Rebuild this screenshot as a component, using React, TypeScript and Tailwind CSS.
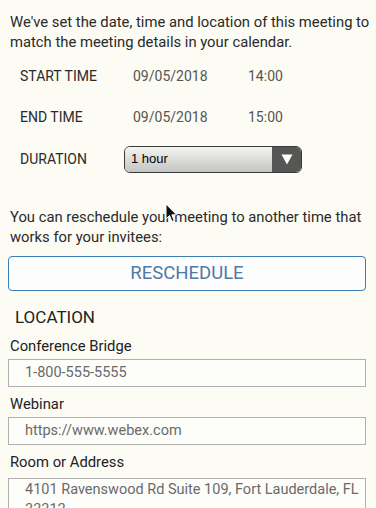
import React from "react";

function Cursor() {
  return (
    <svg
      className="absolute left-[165px] top-[203px]"
      width="14"
      height="20"
      viewBox="0 0 14 20"
    >
      <path
        d="M1 1 L1 16 L4.5 12.5 L7 18.5 L9.2 17.6 L6.8 11.8 L11.5 11.8 Z"
        fill="#111"
        stroke="#fff"
        strokeWidth="1"
        strokeLinejoin="round"
      />
    </svg>
  );
}

export default function App() {
  return (
    <div
      className="relative w-[376px] h-[508px] overflow-hidden bg-[#fcfcf4] text-[#333]"
      style={{ fontFamily: "Roboto, 'Liberation Sans', sans-serif" }}
    >
      <div className="pl-[10px] pr-[2px] pt-[12px]">
        <p className="text-[14.8px] leading-[20px] text-[#2a2a2a]">
          We've set the date, time and location of this meeting to match the
          meeting details in your calendar.
        </p>
      </div>

      <div className="pl-[20px] pt-[14px] flex flex-col text-[14px]">
        <div className="flex items-center h-[20px]">
          <span className="w-[113px] text-[#2a2a2a]">START TIME</span>
          <span className="w-[115px] text-[#555]">09/05/2018</span>
          <span className="text-[#555]">14:00</span>
        </div>
        <div className="flex items-center h-[20px] mt-[21px]">
          <span className="w-[113px] text-[#2a2a2a]">END TIME</span>
          <span className="w-[115px] text-[#555]">09/05/2018</span>
          <span className="text-[#555]">15:00</span>
        </div>
        <div className="flex items-center h-[28px] mt-[18px]">
          <span className="w-[104px] text-[#2a2a2a]">DURATION</span>
          <div className="flex w-[178px] h-[27px] rounded-[6px] border-[1.5px] border-[#3a3a3a] overflow-hidden">
            <div
              className="flex-1 flex items-center pl-[6px] bg-gradient-to-b from-[#f4f4f0] to-[#c4c4c4] text-[13px] text-black"
              style={{ fontFamily: "'Liberation Sans', Arial, sans-serif" }}
            >
              1 hour
            </div>
            <div className="w-[29px] bg-[#565656] flex items-center justify-center">
              <svg width="12" height="11" viewBox="0 0 12 11">
                <path d="M0.5 0.5 L11.5 0.5 L6 10.5 Z" fill="#fff" />
              </svg>
            </div>
          </div>
        </div>
      </div>

      <div className="pl-[10px] pr-[2px] pt-[34px]">
        <p className="text-[14.8px] leading-[20px] text-[#2a2a2a]">
          You can reschedule your meeting to another time that works for your
          invitees:
        </p>
      </div>

      <div className="pl-[8px] pr-[10px] pt-[9px]">
        <button className="w-full h-[35px] rounded-[4px] border border-[#3b7fb4] text-[18.5px] text-[#4f7aa6] flex items-center justify-center bg-[#fdfdfd]">
          RESCHEDULE
        </button>
      </div>

      <div className="pl-[15px] pt-[16px] text-[17px] leading-[20px] text-[#222]">
        LOCATION
      </div>

      <div className="pl-[8px] pr-[10px] flex flex-col">
        <label className="pl-[2px] pt-[9px] text-[14.8px] leading-[20px] text-[#222]">
          Conference Bridge
        </label>
        <div className="mt-[3px] h-[28px] border border-[#b0b0b0] flex items-center pl-[16px] text-[14.5px] text-[#6a6a6a] bg-[#fdfdfa]">
          1-800-555-5555
        </div>

        <label className="pl-[2px] pt-[7px] text-[14.8px] leading-[20px] text-[#222]">
          Webinar
        </label>
        <div className="mt-[3px] h-[28px] border border-[#b0b0b0] flex items-center pl-[16px] text-[14.5px] text-[#6a6a6a] bg-[#fdfdfa]">
          https://www.webex.com
        </div>

        <label className="pl-[2px] pt-[7px] text-[14.8px] leading-[20px] text-[#222]">
          Room or Address
        </label>
        <div className="mt-[6px] h-[60px] border border-[#b0b0b0] pl-[16px] pr-[4px] pt-[1px] text-[14.5px] leading-[20px] text-[#6a6a6a] bg-[#fdfdfa]">
          4101 Ravenswood Rd Suite 109, Fort Lauderdale, FL 33312
        </div>
      </div>

      <Cursor />
    </div>
  );
}
